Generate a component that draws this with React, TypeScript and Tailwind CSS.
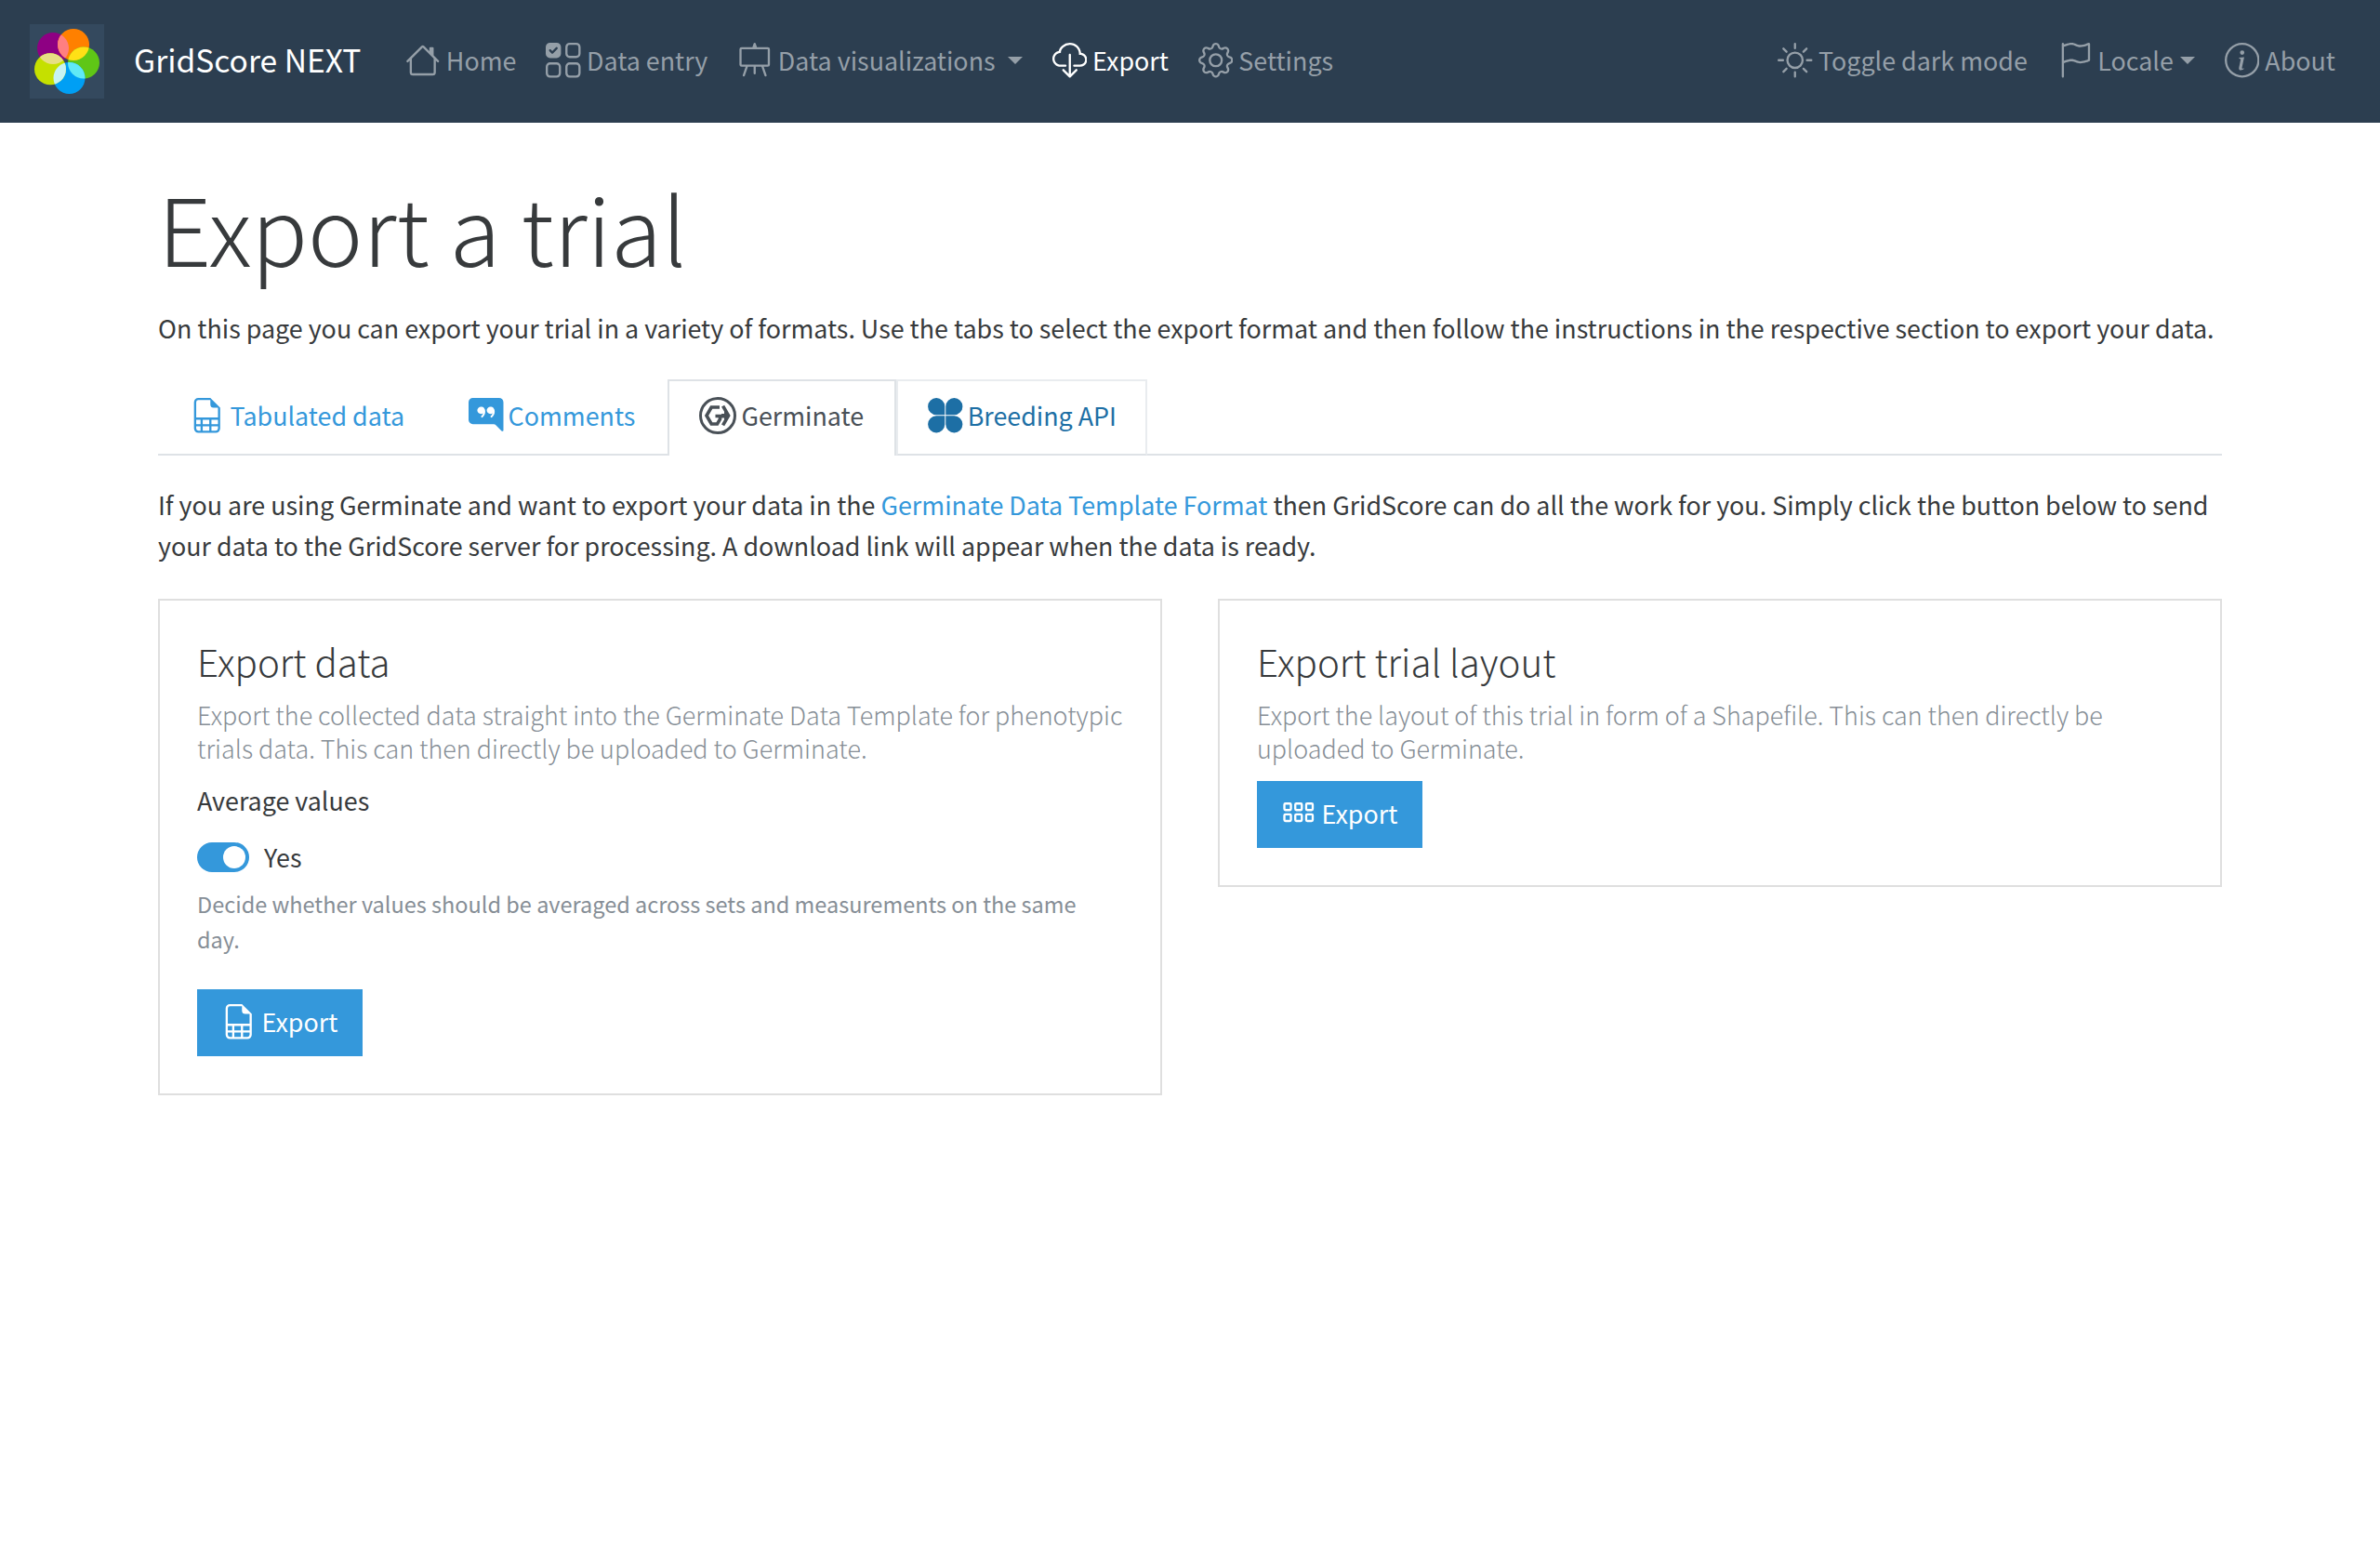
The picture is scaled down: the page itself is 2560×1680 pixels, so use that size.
import React, { ReactNode } from "react";
import {
  BsUiChecksGrid,
  BsEasel,
  BsCloudDownload,
  BsGear,
  BsSun,
  BsFlag,
  BsInfoCircle,
  BsFileEarmarkSpreadsheet,
  BsChatRightQuoteFill,
  BsGrid3X2Gap,
  BsHouse,
} from "react-icons/bs";

const ICON = "size-[37.5px] shrink-0";

function Logo() {
  return (
    <svg viewBox="0 0 80 80" className="size-20 shrink-0 bg-[#34495e]">
      <defs>
        <clipPath id="orange"><circle cx="47" cy="22" r="17" /></clipPath>
        <clipPath id="green"><circle cx="58" cy="41.5" r="17" /></clipPath>
        <clipPath id="blue"><circle cx="42.5" cy="58" r="17" /></clipPath>
        <clipPath id="lime"><circle cx="22" cy="48.3" r="17" /></clipPath>
      </defs>
      <circle cx="25" cy="26" r="17" fill="#8e0083" />
      <circle cx="47" cy="22" r="17" fill="#ff8000" />
      <circle cx="58" cy="41.5" r="17" fill="#5fc616" />
      <circle cx="42.5" cy="58" r="17" fill="#009ff4" />
      <circle cx="22" cy="48.3" r="17" fill="#c5e000" />
      <circle cx="25" cy="26" r="17" fill="#ff7f80" clipPath="url(#orange)" />
      <circle cx="47" cy="22" r="17" fill="#ffe016" clipPath="url(#green)" />
      <circle cx="58" cy="41.5" r="17" fill="#60e9f5" clipPath="url(#blue)" />
      <circle cx="42.5" cy="58" r="17" fill="#c7f3f2" clipPath="url(#lime)" />
      <circle cx="25" cy="26" r="17" fill="#e7df84" clipPath="url(#lime)" />
    </svg>
  );
}

function GerminateIcon() {
  return (
    <svg viewBox="0 0 40 40" className="size-10 shrink-0" fill="none" stroke="currentColor">
      <circle cx="20" cy="20" r="18.5" strokeWidth="3" />
      <path d="M22 11h-8.800L8 20l5.200 9h6.300l3-5.200v-3.300h-5" strokeWidth="3.600" />
      <path d="M25.600 9.600l6 10.400-6 10.400" strokeWidth="3.600" />
      <path d="M24 18h3v-4l6 6-6 7v-4.500h-3z" fill="currentColor" stroke="none" />
    </svg>
  );
}

function CloverIcon() {
  return (
    <svg viewBox="0 0 38 38" className={ICON} fill="currentColor">
      <path d="M18.500 18.500H9.200A9.200 9.200 0 1 1 18.500 9.200zM19.500 18.500V9.200A9.200 9.200 0 1 1 28.800 18.500zM18.500 19.500V28.800A9.200 9.200 0 1 1 9.200 19.500zM19.500 19.500H28.800A9.200 9.200 0 1 1 19.500 28.800z" />
    </svg>
  );
}

function Caret({ className }: { className?: string }) {
  return (
    <span className={className}>
      <span className="block h-0 w-0 border-x-[8px] border-t-[8px] border-x-transparent border-t-current" />
    </span>
  );
}

function NavItem({ icon, label, caret, active }: { icon: ReactNode; label: string; caret?: ReactNode; active?: boolean }) {
  return (
    <a className={active ? "flex items-center text-white" : "flex items-center text-[#959fa8]"}>
      {icon}
      <span className="ml-[6px] pb-[2px]">{label}</span>
      {caret}
    </a>
  );
}

function Card({ title, subtitle, children }: { title: string; subtitle: string; children: ReactNode }) {
  return (
    <section className="flex-1 border-2 border-[#dfdfdf] px-10 pt-[38px] pb-10">
      <h4 className="mb-[13px] text-[40.3px] leading-[54px] font-light">{title}</h4>
      <h6 className="mb-[17px] text-[26.9px] leading-9 font-light text-[#868e96]">{subtitle}</h6>
      {children}
    </section>
  );
}

function ExportButton({ icon }: { icon: ReactNode }) {
  return (
    <button className="flex h-[72px] w-[178px] items-center gap-[6px] bg-[#3498db] pb-[2px] pl-[26px] text-white">
      {icon}
      <span className="pb-px">Export</span>
    </button>
  );
}

export default function App() {
  return (
    <div className="min-h-[1680px] bg-white font-['Noto_Sans_CJK_JP',sans-serif] text-[26.86px] leading-[45px] text-[#373a3c]">
      <nav className="flex h-[132px] items-center bg-[#2c3e50] px-8">
        <Logo />
        <span className="ml-8 pb-[5px] text-[33.6px] text-white">GridScore NEXT</span>
        <div className="ml-12 flex items-center gap-8 pb-[2px]">
          <NavItem icon={<BsHouse className={ICON} />} label="Home" />
          <NavItem icon={<BsUiChecksGrid className={ICON} />} label="Data entry" />
          <NavItem icon={<BsEasel className={ICON} />} label="Data visualizations" caret={<Caret className="ml-[13px]" />} />
          <NavItem icon={<BsCloudDownload className={ICON} />} label="Export" active />
          <NavItem icon={<BsGear className={ICON} />} label="Settings" />
        </div>
        <div className="mr-4 ml-auto flex items-center gap-8 pb-[2px]">
          <NavItem icon={<BsSun className={ICON} />} label="Toggle dark mode" />
          <NavItem icon={<BsFlag className={ICON} />} label="Locale" caret={<Caret className="ml-[7px]" />} />
          <NavItem icon={<BsInfoCircle className={ICON} />} label="About" />
        </div>
      </nav>

      <main className="mx-auto w-[2220px] pt-12">
        <h1 className="mb-[23px] text-[100px] leading-[127px] font-light">Export a trial</h1>
        <p className="mb-[33px]">
          On this page you can export your trial in a variety of formats. Use the tabs to select the export format and then follow the instructions in the respective section to export your data.
        </p>

        <div className="mb-[31px] flex h-[82px]">
          <a className="flex items-center gap-[6px] border-b-2 border-[#dee2e6] pr-[35px] pb-[2px] pl-[34px] text-[#3498db]">
            <BsFileEarmarkSpreadsheet className={ICON} />
            <span className="pb-[2px]">Tabulated data</span>
          </a>
          <a className="flex items-center gap-[5px] border-b-2 border-[#dee2e6] pr-[35px] pb-[2px] pl-[34px] text-[#3498db]">
            <BsChatRightQuoteFill className={ICON} />
            <span className="pb-[2px]">Comments</span>
          </a>
          <a className="flex items-center gap-[5px] border-2 border-b-0 border-[#dee2e6] pr-[33px] pb-[7px] pl-8 text-[#495057]">
            <GerminateIcon />
            <span className="pb-px">Germinate</span>
          </a>
          <a className="flex items-center gap-[5px] border-2 border-[#e9ecef] border-b-[#dee2e6] pr-[31px] pb-[4px] pl-8 text-[#1d6fa5]">
            <CloverIcon />
            <span className="pb-[2px]">Breeding API</span>
          </a>
          <div className="flex-1 border-b-2 border-[#dee2e6]" />
        </div>

        <p className="mb-[35px] leading-[44px]">
          If you are using Germinate and want to export your data in the <a className="text-[#3498db]">Germinate Data Template Format</a> then GridScore can do all the work for you. Simply click the button below to send your data to the GridScore server for processing. A download link will appear when the data is ready.
        </p>

        <div className="flex items-start gap-[60px]">
          <Card title="Export data" subtitle="Export the collected data straight into the Germinate Data Template for phenotypic trials data. This can then directly be uploaded to Germinate.">
            <div className="leading-[42px]">Average values</div>
            <div className="mt-[17px] flex items-center gap-4">
              <span className="flex h-8 w-14 items-center justify-end rounded-full bg-[#3498db] p-1">
                <span className="size-6 rounded-full bg-white" />
              </span>
              <span>Yes</span>
            </div>
            <p className="mt-[9px] mb-[34px] text-[23.5px] leading-[38.4px] text-[#868e96]">
              Decide whether values should be averaged across sets and measurements on the same day.
            </p>
            <ExportButton icon={<BsFileEarmarkSpreadsheet className={ICON} />} />
          </Card>
          <Card title="Export trial layout" subtitle="Export the layout of this trial in form of a Shapefile. This can then directly be uploaded to Germinate.">
            <ExportButton icon={<BsGrid3X2Gap className={ICON} />} />
          </Card>
        </div>
      </main>
    </div>
  );
}
